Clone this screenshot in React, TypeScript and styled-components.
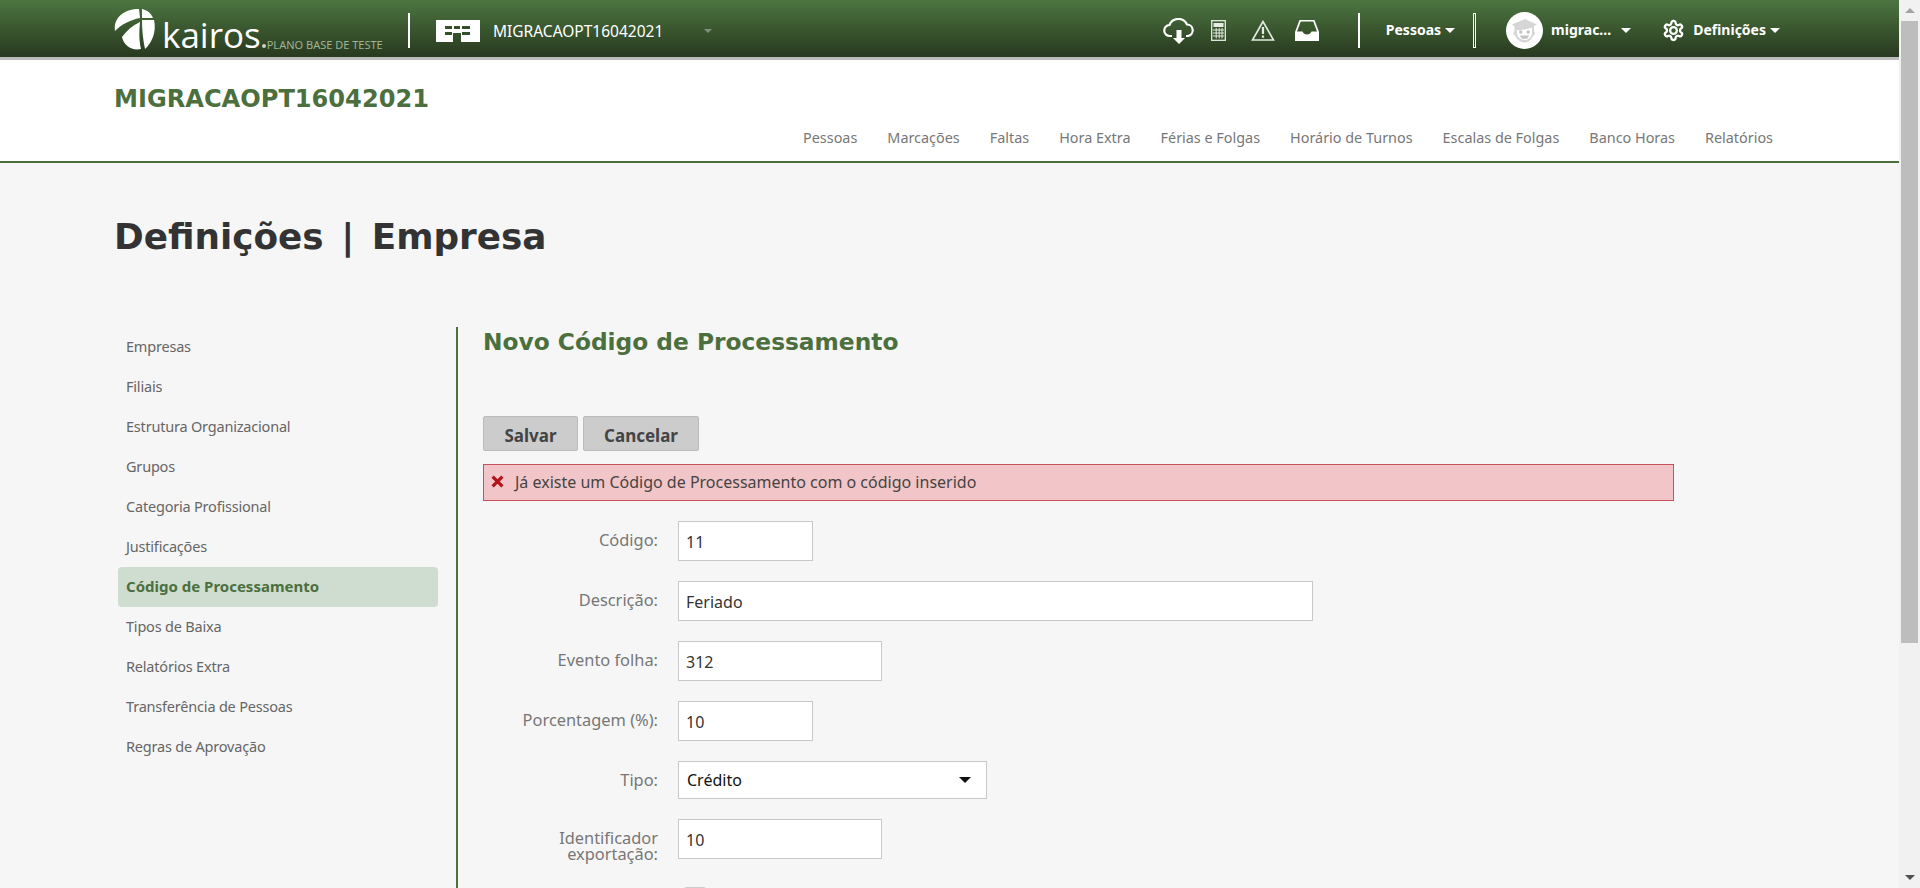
import styled, { createGlobalStyle } from "styled-components";

const GlobalStyle = createGlobalStyle`
  html, body {
    margin: 0;
    padding: 0;
    height: 100%;
    overflow: hidden;
    background: #f6f6f6;
    font-family: "Noto Sans", "DejaVu Sans", sans-serif;
  }
  * { box-sizing: border-box; }
`;

const Page = styled.div`
  width: 1899px;
  height: 1223px;
  background: #f6f6f6;
`;

// the reference shows the browser's own scrollbar, drawn here since headless hides it
const ScrollRail = styled.div`
  position: fixed;
  top: 0;
  right: 0;
  bottom: 0;
  width: 21px;
  display: flex;
  flex-direction: column;
  align-items: center;
  justify-content: space-between;
  background: #f1f1f1;
`;

const ScrollThumbWrap = styled.div`
  display: flex;
  flex-direction: column;
  align-items: center;
  width: 100%;
`;

const ScrollButton = styled.div`
  display: flex;
  align-items: center;
  justify-content: center;
  height: 21px;
`;

const ScrollThumb = styled.div`
  width: 17px;
  height: 622px;
  background: #bdbdbd;
`;

const ArrowUp = styled.span`
  width: 0;
  height: 0;
  border-left: 5px solid transparent;
  border-right: 5px solid transparent;
  border-bottom: 5px solid #a3a3a3;
`;

const ArrowDown = styled.span`
  width: 0;
  height: 0;
  border-left: 5px solid transparent;
  border-right: 5px solid transparent;
  border-top: 5px solid #505050;
`;

const TopBar = styled.header`
  height: 60px;
  display: flex;
  align-items: center;
  justify-content: space-between;
  padding: 4px 119px 0 114px;
  background: linear-gradient(#4c7540, #28391f);
  border-bottom: 3px solid #bdbdbd;
  color: #fff;
`;

const TopGroup = styled.div`
  display: flex;
  align-items: center;
  height: 100%;
`;

const LogoWrap = styled.div`
  display: flex;
  align-items: flex-end;
  width: 294px;
  height: 50px;
  margin-top: -3px;
`;

const LogoSlot = styled.span`
  display: flex;
  margin: 0 0 4px;
`;

const Wordmark = styled.span`
  font-family: "Open Sans", sans-serif;
  font-size: 35px;
  line-height: 42px;
  color: #fff;
  margin: 0 0 -2px 5px;
`;

const WordDot = styled.span`
  display: block;
  width: 4px;
  height: 4px;
  border-radius: 50%;
  background: #c9d4c3;
  margin: 0 0 6px 1px;
`;

const Plan = styled.span`
  font-size: 11px;
  line-height: 12px;
  color: #9fb396;
  margin: 0 0 3px 1px;
  white-space: nowrap;
`;

const TopDivider = styled.span<{ $left: number; $right: number; $hollow?: boolean }>`
  display: block;
  width: ${(p) => (p.$hollow ? 3 : 2)}px;
  height: 35px;
  background: ${(p) => (p.$hollow ? "transparent" : "#fff")};
  border: ${(p) => (p.$hollow ? "1px solid #fff" : "none")};
  margin: 0 ${(p) => p.$right}px 0 ${(p) => p.$left}px;
`;

const CompanyName = styled.span`
  font-size: 15.5px;
  color: #fff;
  margin-left: 13px;
  width: 211px;
`;

const Caret = styled.span<{ $color?: string; $size?: number }>`
  display: inline-block;
  width: 0;
  height: 0;
  border-left: ${(p) => p.$size ?? 6}px solid transparent;
  border-right: ${(p) => p.$size ?? 6}px solid transparent;
  border-top: ${(p) => p.$size ?? 6}px solid ${(p) => p.$color ?? "#fff"};
`;

const IconSlot = styled.span<{ $left: number }>`
  display: flex;
  margin-left: ${(p) => p.$left}px;
`;

const MenuLabel = styled.span<{ $left: number; $right?: number }>`
  font-size: 14px;
  font-weight: 700;
  color: #fff;
  margin: 0 ${(p) => p.$right ?? 4}px 2px ${(p) => p.$left}px;
`;

const Avatar = styled.span`
  display: flex;
  width: 37px;
  height: 37px;
  margin: 0 8px 0 30px;
`;

const Brand = styled.div`
  height: 103px;
  background: #fff;
  border-bottom: 2px solid #4c6f3e;
  padding: 19px 126px 0 114px;
`;

const BrandName = styled.h2`
  margin: 0;
  font-family: "DejaVu Sans", sans-serif;
  font-size: 24.1px;
  line-height: 40px;
  font-weight: 700;
  color: #4c6f3e;
`;

const Nav = styled.nav`
  display: flex;
  justify-content: flex-end;
  gap: 30px;
  margin-top: 9px;
  font-size: 14.4px;
  line-height: 20px;
  color: #777;
`;

const PageTitle = styled.h1`
  margin: 0;
  padding: 50px 0 0 114px;
  height: 164px;
  font-family: "DejaVu Sans", sans-serif;
  font-size: 35.8px;
  word-spacing: 5px;
  line-height: 48px;
  font-weight: 700;
  color: #333;
`;

const Columns = styled.div`
  display: flex;
  padding-left: 118px;
`;

const SideMenu = styled.ul`
  list-style: none;
  margin: 0;
  padding: 0;
  width: 320px;
`;

const SideItem = styled.li<{ $active?: boolean }>`
  height: 40px;
  line-height: 38px;
  padding-left: 8px;
  font-size: ${(p) => (p.$active ? 15 : 14.5)}px;
  letter-spacing: ${(p) => (p.$active ? 0 : -0.2)}px;
  border-radius: 4px;
  color: ${(p) => (p.$active ? "#4c6f3e" : "#666")};
  font-weight: ${(p) => (p.$active ? 700 : 400)};
  background: ${(p) => (p.$active ? "#cfddd0" : "transparent")};
`;

const Main = styled.main`
  width: 1220px;
  margin-left: 18px;
  padding-left: 25px;
  border-left: 2px solid #4c6f3e;
`;

const Heading = styled.h3`
  margin: 0;
  height: 89px;
  font-family: "DejaVu Sans", sans-serif;
  font-size: 23.3px;
  line-height: 30px;
  font-weight: 700;
  color: #4c6f3e;
`;

const Buttons = styled.div`
  display: flex;
  gap: 5px;
`;

const Button = styled.button<{ $width: number }>`
  width: ${(p) => p.$width}px;
  height: 35px;
  padding: 3px 0 0;
  border: 1px solid #bbb;
  border-radius: 2px;
  background: #ccc;
  color: #444;
  font-family: inherit;
  font-size: 17px;
  font-weight: 700;
`;

const ErrorBox = styled.div`
  display: flex;
  align-items: center;
  gap: 11px;
  width: 1191px;
  height: 37px;
  margin: 13px 0 20px;
  padding: 0 0 2px 7px;
  background: #f2c6c8;
  border: 1px solid #c8505a;
  color: #444;
  font-size: 16px;
`;

const FormRow = styled.div`
  display: flex;
  align-items: flex-start;
  margin-bottom: 20px;
`;

const Label = styled.label`
  width: 175px;
  margin-right: 20px;
  padding-top: 11px;
  text-align: right;
  color: #777;
  font-size: 16.4px;
  line-height: 16px;
`;

const Input = styled.input<{ $width: number }>`
  display: block;
  width: ${(p) => p.$width}px;
  height: 40px;
  padding: 1px 7px 0;
  border: 1px solid #c8c8c8;
  background: #fff;
  color: #333;
  font-family: inherit;
  font-size: 16px;
  outline: none;
`;

const SelectBox = styled.div`
  display: flex;
  align-items: center;
  justify-content: space-between;
  width: 309px;
  height: 38px;
  padding: 0 15px 0 8px;
  border: 1px solid #c8c8c8;
  background: #fff;
  color: #111;
  font-size: 16px;
`;

const CheckBox = styled.span`
  display: block;
  width: 22px;
  height: 22px;
  margin: 5px 0 0 6px;
  border: 1px solid #ccc;
  border-radius: 2px;
  background: #fff;
`;

const sideItems = [
  "Empresas",
  "Filiais",
  "Estrutura Organizacional",
  "Grupos",
  "Categoria Profissional",
  "Justificações",
  "Código de Processamento",
  "Tipos de Baixa",
  "Relatórios Extra",
  "Transferência de Pessoas",
  "Regras de Aprovação",
];

const navItems = [
  "Pessoas",
  "Marcações",
  "Faltas",
  "Hora Extra",
  "Férias e Folgas",
  "Horário de Turnos",
  "Escalas de Folgas",
  "Banco Horas",
  "Relatórios",
];

const LogoMark = () => (
  <svg width="43" height="42" viewBox="0 0 43 42" fill="#fff">
    <path d="M1 23C-1 10 10 1 25 1l1 9C16 12 8 16 1 23z" />
    <path d="M28 1c5 1 9 4 11 9H28z" />
    <path d="M28 12h12c3 12-3 24-9 29-2-9-3-19-3-29z" />
    <path d="M8 29c5-7 11-12 18-15-1 10-1 19 1 27-9 2-17-3-19-12z" />
  </svg>
);

const BuildingIcon = () => (
  <svg width="44" height="22" viewBox="0 0 44 22">
    <path fill="#fff" d="M0 0h44v22H25v-9h-8v9H0z" />
    <path fill="#355028" d="M9 6h7v3H9zM18 6h6v3h-6zM26 6h8v3h-8zM9 12h7v3H9zM26 12h8v3h-8z" />
  </svg>
);

const CloudIcon = () => (
  <svg width="32" height="26" viewBox="0 0 32 26" fill="none" stroke="#fff" strokeWidth="2.2">
    <path d="M9 18H7a5.5 5.5 0 0 1-.5-11A9.5 9.5 0 0 1 24 6.5 5.8 5.8 0 0 1 25 18h-2" />
    <path fill="#fff" stroke="none" d="M13.5 12h5v8h3.5L16 26l-6-6h3.5z" />
  </svg>
);

const CalcIcon = () => (
  <svg width="15" height="21" viewBox="0 0 15 21" fill="none" stroke="#e6ebe3" strokeWidth="1.3">
    <rect x="0.7" y="0.7" width="13.6" height="19.6" />
    <rect x="2.5" y="3" width="10" height="4" fill="#e6ebe3" stroke="none" />
    <path d="M2 10h11M2 13h11M2 16h11M5.2 8v10.5M8.2 8v10.5M11 8v10.5" strokeWidth="1" />
  </svg>
);

const WarningIcon = () => (
  <svg width="24" height="21" viewBox="0 0 24 21" fill="none" stroke="#e6ebe3" strokeWidth="1.6">
    <path d="M12 1.5 1.5 20h21z" />
    <path d="M12 7v7" strokeWidth="2.2" />
    <path d="M12 15.5v2.2" strokeWidth="2.2" />
  </svg>
);

const InboxIcon = () => (
  <svg width="24" height="21" viewBox="0 0 24 21">
    <path
      fill="#fff"
      fillRule="evenodd"
      d="M4.5 0h15L24 12v9H0v-9zM5.8 1.6 2 11.5h5.5c.8 2 2.5 3 4.5 3s3.7-1 4.5-3H22L18.2 1.6z"
    />
  </svg>
);

const AvatarIcon = () => (
  <svg width="37" height="37" viewBox="0 0 37 37">
    <circle cx="18.5" cy="18.5" r="18.5" fill="#fff" />
    <path fill="#d6d6d6" d="M6 12.5 19 7l12 5.5-3 1.5v5c1.5 1 1.500 4-1 5-1.500 4-5 6.500-8.500 6.500S11 28 9.500 24c-2.500-1-2.500-4-1-5v-4.500z" />
    <path fill="#fff" d="M11 18c4 .5 10-.5 15-2.500V20c0 5.500-3.500 8-7.500 8S11 25 11 20z" />
    <circle cx="14.8" cy="20" r="1.7" fill="#c4c4c4" />
    <circle cx="22.2" cy="20" r="1.7" fill="#c4c4c4" />
    <path fill="#c4c4c4" d="M14 23.5h9c-.5 2.500-2.300 3.500-4.500 3.500S14.500 26 14 23.500z" />
  </svg>
);

const GearIcon = () => (
  <svg width="23" height="23" viewBox="0 0 24 24" fill="none" stroke="#fff" strokeWidth="2.4">
    <path d="M12.200 2h-.4a2 2 0 0 0-2 2v.2a2 2 0 0 1-1 1.700l-.4.300a2 2 0 0 1-2 0l-.2-.1a2 2 0 0 0-2.700.7l-.2.400a2 2 0 0 0 .7 2.700l.2.100a2 2 0 0 1 1 1.700v.5a2 2 0 0 1-1 1.700l-.2.100a2 2 0 0 0-.7 2.700l.2.400a2 2 0 0 0 2.700.7l.2-.1a2 2 0 0 1 2 0l.4.300a2 2 0 0 1 1 1.700v.2a2 2 0 0 0 2 2h.4a2 2 0 0 0 2-2v-.2a2 2 0 0 1 1-1.700l.4-.3a2 2 0 0 1 2 0l.2.100a2 2 0 0 0 2.700-.7l.2-.4a2 2 0 0 0-.7-2.700l-.2-.1a2 2 0 0 1-1-1.700v-.5a2 2 0 0 1 1-1.700l.2-.1a2 2 0 0 0 .7-2.700l-.2-.4a2 2 0 0 0-2.700-.7l-.2.100a2 2 0 0 1-2 0l-.4-.3a2 2 0 0 1-1-1.700V4a2 2 0 0 0-2-2z" />
    <circle cx="12" cy="12" r="3.5" />
  </svg>
);

const CrossIcon = () => (
  <svg width="13" height="13" viewBox="0 0 12 12" stroke="#b3131b" strokeWidth="3" fill="none">
    <path d="M1.5 1.5l9 9M10.5 1.5l-9 9" />
  </svg>
);

const App = () => (
  <>
    <GlobalStyle />
    <Page>
      <TopBar>
        <TopGroup>
          <LogoWrap>
            <LogoSlot><LogoMark /></LogoSlot>
            <Wordmark>kairos</Wordmark>
            <WordDot />
            <Plan>PLANO BASE DE TESTE</Plan>
          </LogoWrap>
          <TopDivider $left={0} $right={26} />
          <BuildingIcon />
          <CompanyName>MIGRACAOPT16042021</CompanyName>
          <Caret $color="#7f8f78" $size={4} />
        </TopGroup>
        <TopGroup>
          <IconSlot $left={0}><CloudIcon /></IconSlot>
          <IconSlot $left={16}><CalcIcon /></IconSlot>
          <IconSlot $left={25}><WarningIcon /></IconSlot>
          <IconSlot $left={20}><InboxIcon /></IconSlot>
          <TopDivider $left={39} $right={0} />
          <MenuLabel $left={26}>Pessoas</MenuLabel>
          <Caret $size={5} />
          <TopDivider $left={18} $right={0} $hollow />
          <Avatar><AvatarIcon /></Avatar>
          <MenuLabel $left={0} $right={10}>migrac...</MenuLabel>
          <Caret $size={5} />
          <IconSlot $left={31}><GearIcon /></IconSlot>
          <MenuLabel $left={8}>Definições</MenuLabel>
          <Caret $size={5} />
        </TopGroup>
      </TopBar>
      <Brand>
        <BrandName>MIGRACAOPT16042021</BrandName>
        <Nav>
          {navItems.map((item) => (
            <span key={item}>{item}</span>
          ))}
        </Nav>
      </Brand>
      <PageTitle>Definições | Empresa</PageTitle>
      <Columns>
        <SideMenu>
          {sideItems.map((item) => (
            <SideItem key={item} $active={item === "Código de Processamento"}>
              {item}
            </SideItem>
          ))}
        </SideMenu>
        <Main>
          <Heading>Novo Código de Processamento</Heading>
          <Buttons>
            <Button $width={95}>Salvar</Button>
            <Button $width={116}>Cancelar</Button>
          </Buttons>
          <ErrorBox>
            <CrossIcon />
            Já existe um Código de Processamento com o código inserido
          </ErrorBox>
          <FormRow>
            <Label>Código:</Label>
            <Input $width={135} value="11" readOnly />
          </FormRow>
          <FormRow>
            <Label>Descrição:</Label>
            <Input $width={635} value="Feriado" readOnly />
          </FormRow>
          <FormRow>
            <Label>Evento folha:</Label>
            <Input $width={204} value="312" readOnly />
          </FormRow>
          <FormRow>
            <Label>Porcentagem (%):</Label>
            <Input $width={135} value="10" readOnly />
          </FormRow>
          <FormRow>
            <Label>Tipo:</Label>
            <SelectBox>
              Crédito
              <Caret $color="#111" />
            </SelectBox>
          </FormRow>
          <FormRow>
            <Label>Identificador exportação:</Label>
            <Input $width={204} value="10" readOnly />
          </FormRow>
          <FormRow>
            <Label />
            <CheckBox />
          </FormRow>
        </Main>
      </Columns>
    </Page>
    <ScrollRail>
      <ScrollThumbWrap>
        <ScrollButton><ArrowUp /></ScrollButton>
        <ScrollThumb />
      </ScrollThumbWrap>
      <ScrollButton><ArrowDown /></ScrollButton>
    </ScrollRail>
  </>
);

export default App;
